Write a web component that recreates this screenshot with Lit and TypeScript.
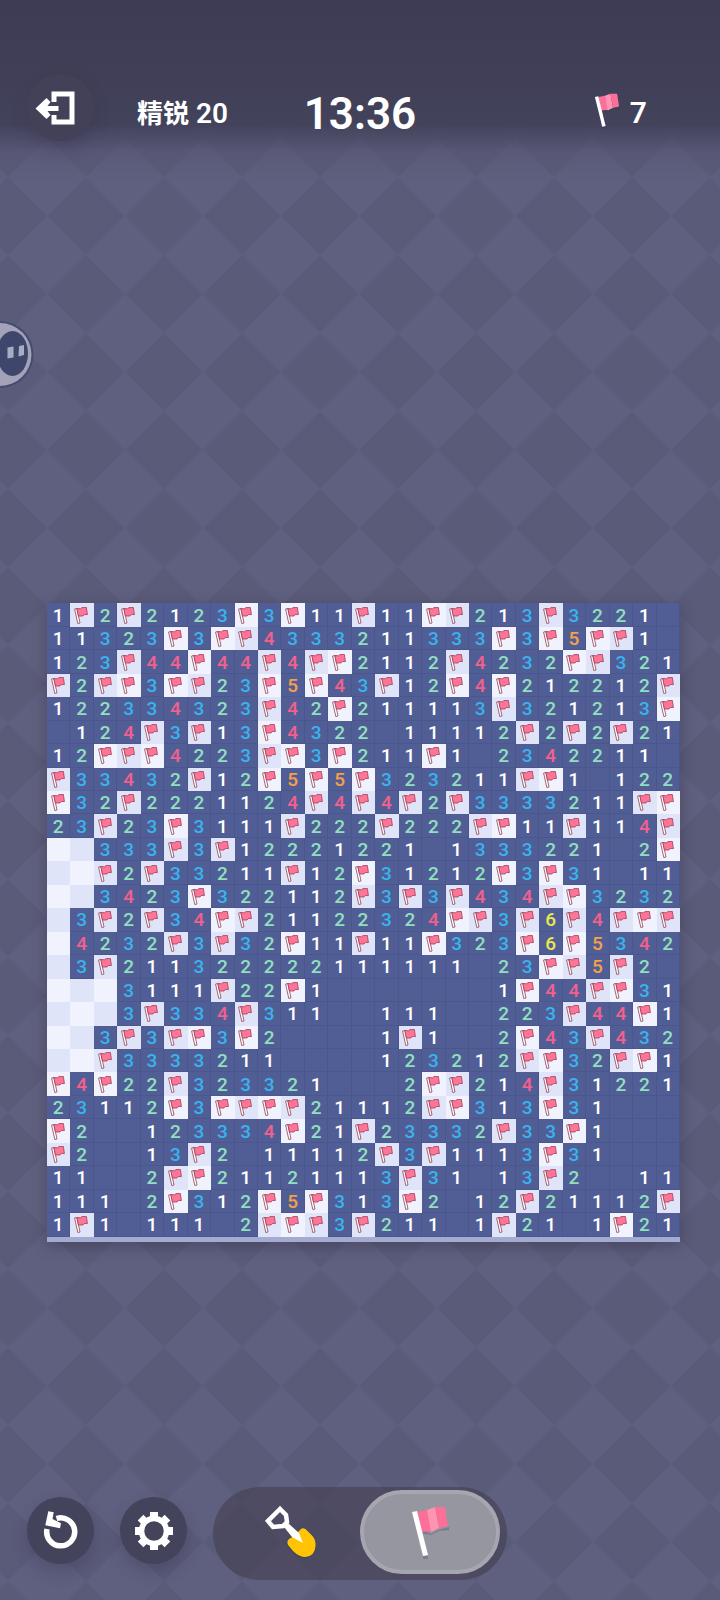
import { LitElement, html, css, svg, nothing } from "lit";
import { customElement, property, state } from "lit/decorators.js";
import { classMap } from "lit/directives/class-map.js";

// "F" is a flagged cell, "#" a covered one, "." an open cell without neighbours.
const ROWS = [
  "1F2F2123F3F11F11FF213F3221.",
  "11323F3FF4333211333F3F5FF1.",
  "123F44F44F4FF2112F4232FF321",
  "F2FF3FF23F5F43F12F4F212212F",
  "122334323F42F211113F321213F",
  ".124F3F13F4322.11112F2F2F21",
  "12FFF4223FF3F211F1.2342211.",
  "F33432F12F5F5F323211FF1.122",
  "F32F2221124F4F4F2F3333211FF",
  "23F23F3111F222F222FF11F114F",
  "##333F3F12221221.1333221.2F",
  "##F2F33211F12F31212F3F31.11",
  "##3423F322112F3F3F434FF3232",
  "#3F2F34FF21122324FF3F6F4FFF",
  "#4232F3F32F11F11F323F6F5342",
  "#3F21132222211111" + "1.23FF5F2.",
  "###3111F22F1.......1F44FF31",
  "###3F334F311..111..223F44F1",
  "##3F3FF3F2....1F1..2F43F432",
  "##F3333211....123212FF32FF1",
  "F4F22F323321...2FF214F31221",
  "23112F3FFFF21112FF313F31...",
  "F2..123334F21F23332F33F1...",
  "F2..13F2.11112F3F1113F31...",
  "11..2FF21121113F31.13F2..11",
  "111.2F312F5F313F2.12F21112F",
  "1F1.111.2FFF3F211.1F21.1F21",
];

@customElement("flag-icon")
export class FlagIcon extends LitElement {
  static styles = css`
    :host {
      display: inline-block;
      line-height: 0;
    }
    .art {
      width: 100%;
      height: 100%;
      overflow: visible;
    }
  `;

  @property({ type: Boolean }) outlined = false;

  render() {
    return this.outlined
      ? html`<svg class="art" viewBox="0 0 14 17" aria-hidden="true">
          <path d="M.6 2 2.900 1.500 6 16 3.800 16.500Z" fill="#fff" stroke="#8e4054" stroke-width=".8" />
          <path d="M2.800 1.500 6.500 1.800 8 .6 12.400 .5 13.400 7.600 10.200 7.500 9 9 4.400 9Z" fill="#ff7596" stroke="#a03c5a" stroke-width=".8" />
        </svg>`
      : html`<svg class="art" viewBox="0 0 38 52" aria-hidden="true">
          <path d="M8 22 20 28 27 24 38 21V24L28 25 20 29 9 27ZM12 50h5v3h-5Z" fill="#35354a" opacity=".25" />
          <path d="M6 6 16 4 22 25 10 26Z" fill="#fb6f98" />
          <path d="M16 4 24 1 28 22 20 26Z" fill="#ff94b2" />
          <path d="M24 1 34 1 37 20 28 22Z" fill="#fb6f98" />
          <path d="M1 6 6 5 17 49 12 50Z" fill="#fff" />
        </svg>`;
  }
}

@customElement("mine-board")
export class MineBoard extends LitElement {
  static styles = css`
    :host {
      display: block;
    }
    .board {
      display: grid;
      grid-template-columns: repeat(27, 1fr);
      border-bottom: 5px solid #a4abd0;
      box-shadow: 0 4px 14px rgba(44, 40, 62, 0.4);
      background: #515e95;
    }
    .cell {
      display: grid;
      place-items: center;
      aspect-ratio: 1;
      min-width: 0;
      min-height: 0;
      box-sizing: border-box;
      margin: 0;
      padding: 2px 0 0;
      border: 0;
      border-right: 1px solid #4a578e;
      border-bottom: 1px solid #4a578e;
      border-radius: 0;
      background: #515e95;
      font: 500 19px/20px Roboto, "Liberation Sans", sans-serif;
      color: #fff;
    }
    .cover {
      padding: 0 2px 0 0;
      border: 0;
      background: #e0e4f8;
    }
    .light {
      background: #f0f2fe;
    }
    .n2 { color: #90e0c0; }
    .n3 { color: #38b4ee; }
    .n4 { color: #f2608e; }
    .n5 { color: #f5a04c; }
    .n6 { color: #e9e94e; }
    .flag {
      width: 14px;
      height: 17px;
    }
  `;

  render() {
    return html`<div class="board">
      ${ROWS.map((row, y) =>
        [...row].map((mark, x) => {
          const cover = mark === "F" || mark === "#";
          const classes = {
            cell: true,
            cover,
            light: cover && (x + y) % 2 === 0,
            ["n" + mark]: /\d/.test(mark),
          };
          return html`<button class=${classMap(classes)}>${
            mark === "F" ? html`<flag-icon class="flag" outlined></flag-icon>` : cover || mark === "." ? nothing : mark
          }</button>`;
        })
      )}
    </div>`;
  }
}

@customElement("app-root")
export class AppRoot extends LitElement {
  static styles = css`
    :host {
      display: block;
      color: #fff;
      font-family: Roboto, "Noto Sans CJK SC", sans-serif;
      font-weight: 600;
    }
    .page {
      position: relative;
      display: flex;
      flex-direction: column;
      min-height: 100vh;
      box-sizing: border-box;
      overflow: hidden;
      background:
        linear-gradient(#3d3c54, #403f57 80px, rgba(66, 65, 90, 0.95) 124px, rgba(82, 82, 110, 0.4) 152px, rgba(90, 91, 121, 0) 184px),
        url("data:image/svg+xml,%3Csvg xmlns='http://www.w3.org/2000/svg' width='78' height='78'%3E%3Cpath d='M39 0 78 39 39 78 0 39Z' fill='%235f607f'/%3E%3C/svg%3E")
          8px 60px / 78px 78px,
        #5a5b79;
    }
    button {
      padding: 0;
      border: 0;
      font: inherit;
      color: inherit;
      cursor: pointer;
    }
    .top {
      display: grid;
      grid-template-columns: 1fr auto 1fr;
      align-items: center;
      padding: 72px 27px 0;
    }
    .start {
      display: flex;
      align-items: center;
      gap: 43px;
    }
    .round {
      display: grid;
      place-items: center;
      flex: none;
      width: 67px;
      height: 67px;
      border-radius: 50%;
      background: #43445b;
      box-shadow: 0 8px 16px rgba(50, 48, 72, 0.3);
    }
    .exit {
      background: #424157;
    }
    .level {
      padding-top: 12px;
      font-size: 28px;
      line-height: 40px;
      white-space: nowrap;
    }
    .zh {
      font-family: "Noto Sans CJK SC", sans-serif;
      font-weight: 700;
      font-size: 26px;
    }
    .time {
      padding-top: 14px;
      font-size: 44px;
      line-height: 56px;
      text-align: center;
      white-space: nowrap;
    }
    .left {
      display: flex;
      align-items: center;
      justify-content: flex-end;
      gap: 10px;
      padding: 12px 46px 0 0;
      font-size: 30px;
      line-height: 40px;
    }
    .left-flag {
      width: 26px;
      height: 35px;
      margin-bottom: 6px;
    }
    .field {
      flex: 1;
      display: grid;
      align-content: center;
      padding: 216px 40px 0 47px;
    }
    .helper {
      position: absolute;
      left: 0;
      top: 321px;
      width: 34px;
      height: 68px;
      background: none;
    }
    .bottom {
      display: flex;
      align-items: flex-start;
      gap: 26px;
      padding: 0 27px 20px;
    }
    .tool {
      margin-top: 10px;
    }
    .modes {
      display: grid;
      grid-template-columns: 139px 140px;
      align-items: start;
      height: 93px;
      padding: 3px 7px 0 8px;
      box-sizing: border-box;
      border-radius: 47px;
      background: rgba(72, 68, 90, 0.75);
    }
    .mode {
      display: grid;
      place-items: center;
      height: 84px;
      box-sizing: border-box;
      border: 4px solid transparent;
      border-radius: 42px;
      background: none;
    }
    .on {
      border-color: #a5a6b0;
      background: #95969f;
    }
    .mode-flag {
      width: 38px;
      height: 52px;
    }
  `;

  @state() private mode = "flag";

  private pick(mode: string) {
    this.mode = mode;
  }

  render() {
    return html`<main class="page">
      <header class="top">
        <div class="start">
          <button class="round exit" aria-label="退出">
            <svg width="52" height="42" viewBox="-2 0 52 42" aria-hidden="true">
              <path d="M17 16V8H35V36H17V29" fill="none" stroke="#fff" stroke-width="5" />
              <path d="M-1.500 22.500 9.500 12 13.500 16 10.500 20H21.500V25H10.500L13.500 29 9.500 33Z" fill="#fff" />
            </svg>
          </button>
          <div class="level"><span class="zh">精锐</span> 20</div>
        </div>
        <div class="time">13:36</div>
        <div class="left"><flag-icon class="left-flag"></flag-icon>7</div>
      </header>
      <button class="helper" aria-label="助手">
        <svg width="34" height="68" viewBox="0 0 34 68" aria-hidden="true">
          <circle cx="0" cy="33.500" r="33.500" fill="#464b70" />
          <circle cx="0" cy="33.500" r="31.500" fill="#a2a3b8" />
          <ellipse cx="12.500" cy="32.500" rx="15.500" ry="22.500" fill="#3e476b" />
          <path d="M7.500 26.500 13.500 25.500V36.500L7.500 37.500ZM19 25 24 24V34L18.500 35.500Z" fill="#a9adc3" />
        </svg>
      </button>
      <section class="field"><mine-board></mine-board></section>
      <footer class="bottom">
        <button class="round tool" aria-label="重新开始">
          <svg width="40" height="40" viewBox="0 0 40 40" aria-hidden="true">
            <path d="M6 18A14 14 0 1 0 15.500 7.500" fill="none" stroke="#fff" stroke-width="5.500" />
            <path d="M7.300 .3 12.700 1.300 11.500 8 20 12.300 19 17.300 4.300 14.300Z" fill="#fff" />
          </svg>
        </button>
        <button class="round tool" aria-label="设置">
          <svg width="38" height="38" viewBox="-19 -19 38 38" aria-hidden="true">
            ${[0, 45, 90, 135].map((turn) => svg`<path d="M-4-19H4V-12H-4ZM-4 12H4V19H-4Z" transform="rotate(${turn})" fill="#fff" />`)}
            <circle r="12.500" fill="none" stroke="#fff" stroke-width="5.500" />
          </svg>
        </button>
        <div class="modes">
          <button class=${classMap({ mode: true, on: this.mode === "dig" })} aria-label="挖开" @click=${() => this.pick("dig")}>
            <svg width="54" height="54" viewBox="0 0 54 54" aria-hidden="true">
              <path d="M26 34 39 25Q46 28 51 37Q54 45 48 50Q42 55 34 52Q27 48 24 41Z" fill="#35354a" opacity=".3" />
              <path d="M37 24Q39 22.500 42 24.500L47 29.500Q52 34 51.500 41Q51 51 41.500 52Q35 52 29 46L24 40Q22.500 36 25 34L30 31Z" fill="#ffc505" />
              <path d="M16 4 4 16 9 22 19 21 23 17 22 10Z" fill="none" stroke="#fff" stroke-width="4.500" />
              <path d="M20 22 24 18 35 28 39 38 28 32Z" fill="#fff" />
            </svg>
          </button>
          <button class=${classMap({ mode: true, on: this.mode === "flag" })} aria-label="插旗" @click=${() => this.pick("flag")}>
            <flag-icon class="mode-flag"></flag-icon>
          </button>
        </div>
      </footer>
    </main>`;
  }
}
